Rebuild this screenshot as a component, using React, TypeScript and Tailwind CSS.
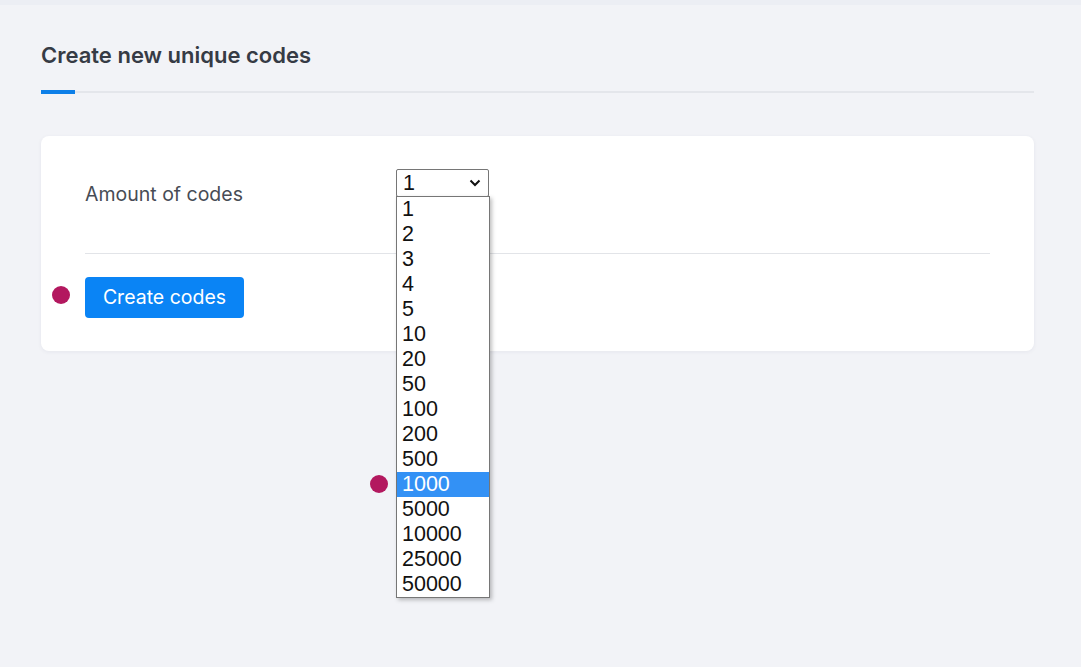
const OPTIONS = ['1', '2', '3', '4', '5', '10', '20', '50', '100', '200', '500', '1000', '5000', '10000', '25000', '50000'];

const Dot = ({ className }: { className: string }) => (
  <span className={`absolute h-[18px] w-[18px] rounded-full bg-[#b3185f] ${className}`} />
);

const AmountSelect = () => (
  <div className="relative w-[93px]">
    <div className="flex h-[28px] items-center justify-between border border-[#767676] bg-white pl-[6px] pr-[5px] text-[21.5px] leading-none text-[#111] font-['Liberation_Sans',sans-serif] rounded-[2px]">
      <span className="mt-[1px]">1</span>
      <svg width="12" height="8" viewBox="0 0 12 8" className="mr-[2px]">
        <path d="M1.5 1.5 L6 6 L10.5 1.5" fill="none" stroke="#111" strokeWidth="2" />
      </svg>
    </div>
    <ul className="absolute left-0 top-[27px] z-10 w-[94px] border border-[#767676] bg-white shadow-[2px_2px_4px_rgba(0,0,0,0.25)] font-['Liberation_Sans',sans-serif] text-[21.5px] text-[#111]">
      {OPTIONS.map((o) => (
        <li
          key={o}
          className={`h-[25px] pl-[5px] leading-[25px] ${o === '1000' ? 'bg-[#3391f5] text-white' : ''}`}
        >
          {o}
        </li>
      ))}
    </ul>
    <Dot className="left-[-26px] top-[306px]" />
  </div>
);

const App = () => {
  return (
    <div className="min-h-[667px] w-[1081px] bg-[#f2f3f7] font-['Inter','Noto_Sans',sans-serif]">
      <div className="h-[5px] bg-[#eceef4]" />
      <div className="pl-[41px] pr-[47px] pt-[37px]">
        <h1 className="text-[22px] font-semibold text-[#363b45] leading-[26px]">Create new unique codes</h1>
        <div className="mt-[22px] flex items-center">
          <div className="h-[4px] w-[34px] bg-[#0d7fe8]" />
          <div className="h-[2px] flex-1 bg-[#e4e6eb]" />
        </div>
        <section className="relative mt-[42px] rounded-[8px] bg-white px-[44px] pt-[33px] pb-[33px] shadow-[0_1px_4px_rgba(30,40,80,0.06)]">
          <div className="flex items-start">
            <label className="w-[311px] pt-[13px] text-[19.5px] leading-[24px] text-[#474c55]">Amount of codes</label>
            <AmountSelect />
          </div>
          <div className="mt-[47px] h-px bg-[#e2e4e8]" />
          <div className="relative mt-[23px]">
            <Dot className="left-[-33px] top-[9px]" />
            <button className="h-[41px] w-[159px] rounded-[4px] bg-[#0a84f5] text-[19.5px] text-white">Create codes</button>
          </div>
        </section>
      </div>
    </div>
  );
};

export default App;
